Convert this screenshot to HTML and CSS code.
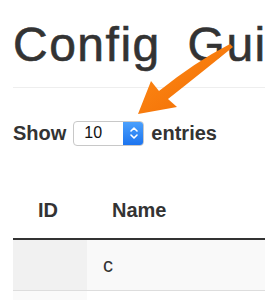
FILE: index.html
```html
<!DOCTYPE html>
<html lang="en">
<head>
    <meta charset="UTF-8">
    <meta name="viewport" content="width=device-width, initial-scale=1.0">
    <title>Config Gui</title>
    <link rel="stylesheet" href="styles.css">
</head>
<body>

<div class="page">
    <!-- Title -->
    <h1 class="page-header">Config Guide</h1>

    <!-- Entries length -->
    <div class="length">
        <span>Show</span>
        <span class="select">
            <span class="select-value">10</span>
            <span class="select-btn">
                <svg width="10" height="16" viewBox="0 0 10 16">
                    <path d="M2 6 L5 3 L8 6" fill="none" stroke="#fff" stroke-width="1.6" stroke-linecap="round" stroke-linejoin="round"/>
                    <path d="M2 10 L5 13 L8 10" fill="none" stroke="#fff" stroke-width="1.6" stroke-linecap="round" stroke-linejoin="round"/>
                </svg>
            </span>
        </span>
        <span>entries</span>
    </div>

    <!-- Table -->
    <table class="data">
        <thead>
            <tr>
                <th class="col-id">ID</th>
                <th>Name</th>
            </tr>
        </thead>
        <tbody>
            <tr class="odd">
                <td class="sorted"></td>
                <td>c</td>
            </tr>
            <tr>
                <td class="sorted"></td>
                <td></td>
            </tr>
        </tbody>
    </table>
</div>

<!-- Arrow pointing at the select -->
<svg class="arrow" width="265" height="300" viewBox="0 0 265 300">
    <defs>
        <linearGradient id="orange" x1="0" y1="0" x2="1" y2="1">
            <stop offset="0" stop-color="#ff8d1a"/>
            <stop offset="1" stop-color="#f06a00"/>
        </linearGradient>
    </defs>
    <path d="M230 44 L233 47 Q196 77 168 99 L177 107 L138 114 L151 81 L159 91 Q195 62 230 44 Z" fill="url(#orange)"/>
</svg>

</body>
</html>
```

FILE: styles.css
```css
body {
    margin: 0;
    font-family: "Liberation Sans", Arial, sans-serif;
    color: #333;
    background-color: #fff;
    overflow: hidden;
}
.page {
    padding-left: 13px;
}
.page-header {
    margin: 19px 0 0 0;
    padding-bottom: 15px;
    border-bottom: 1px solid #eee;
    font-size: 48px;
    font-weight: normal;
    line-height: 1.1;
    letter-spacing: 1.5px;
    word-spacing: 12px;
    -webkit-text-stroke: 0.6px #333;
    white-space: nowrap;
    overflow: hidden;
}
.length {
    display: flex;
    align-items: center;
    gap: 7px;
    margin-top: 33px;
    font-size: 20px;
    font-weight: bold;
}
.select {
    display: flex;
    width: 71px;
    height: 25px;
    box-sizing: border-box;
    border: 1px solid #c8c8c8;
    border-radius: 4px;
    overflow: hidden;
    background-color: #fff;
    font-weight: normal;
}
.select-value {
    flex: 1;
    display: flex;
    align-items: center;
    padding-left: 10px;
    font-size: 16px;
    color: #111;
}
.select-btn {
    width: 21px;
    display: flex;
    justify-content: center;
    align-items: center;
    background: linear-gradient(#4da2fd, #1a72ee);
    margin: -1px -1px -1px 0;
}
.data {
    width: 100%;
    margin-top: 36px;
    border-collapse: collapse;
    font-size: 20px;
    line-height: 28px;
}
.data th {
    text-align: left;
    padding: 14px 25px;
    border-bottom: 2px solid #333;
}
.data th.col-id {
    width: 24px;
}
.data td {
    padding: 11px 16px;
    height: 28px;
    border-bottom: 1px solid #ddd;
}
.data tr.odd td {
    background-color: #f9f9f9;
}
.data tr.odd td.sorted {
    background-color: #f1f1f1;
}
.data td.sorted {
    background-color: #fafafa;
}
.arrow {
    position: absolute;
    left: 0;
    top: 0;
    pointer-events: none;
}
```
